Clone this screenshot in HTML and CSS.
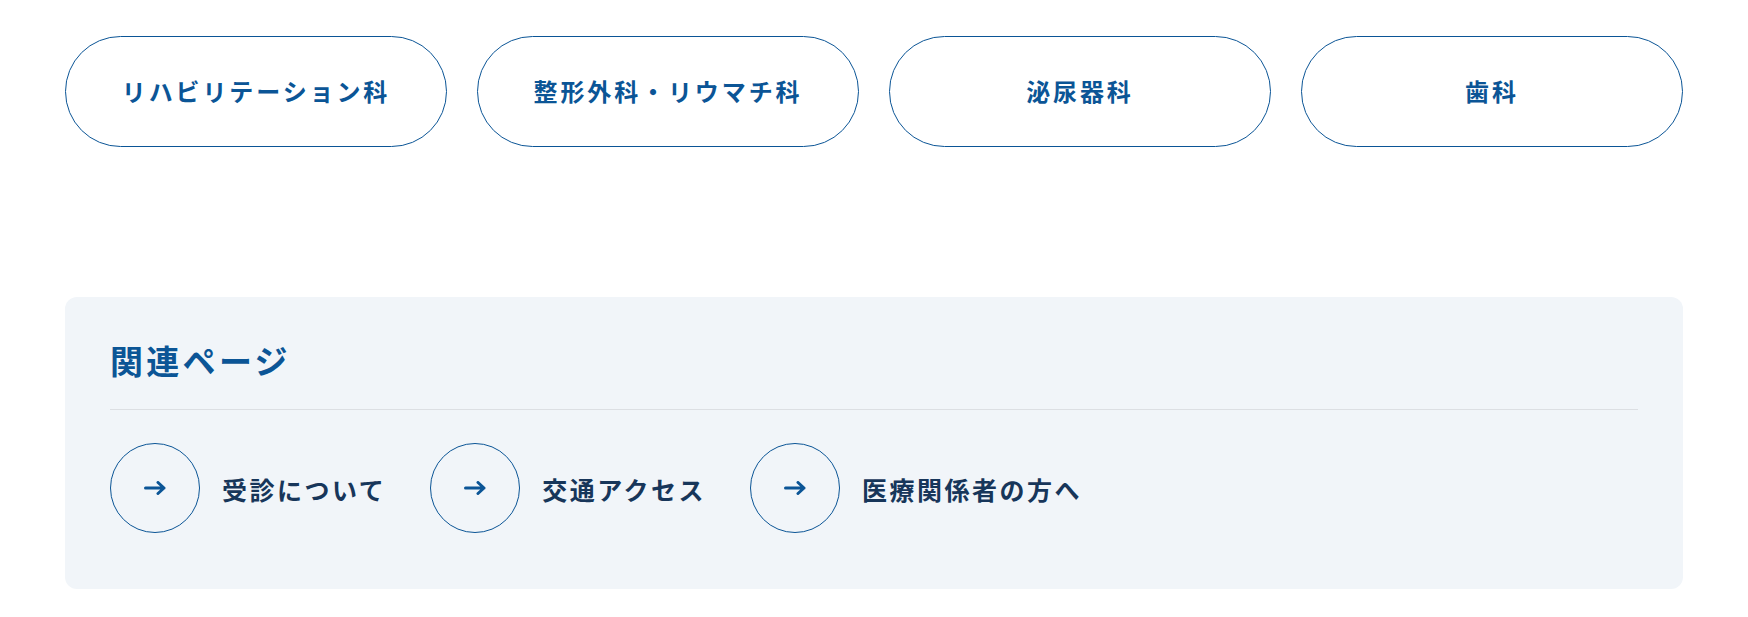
FILE: index.html
```html
<!DOCTYPE html>
<html lang="ja">
<head>
<meta charset="utf-8">
<title>診療科・関連ページ</title>
<link rel="stylesheet" href="styles.css">
</head>
<body>
<main class="page">
  <nav class="dept-list">
    <a class="dept-btn" href="#">リハビリテーション科</a>
    <a class="dept-btn" href="#">整形外科・リウマチ科</a>
    <a class="dept-btn" href="#">泌尿器科</a>
    <a class="dept-btn" href="#">歯科</a>
  </nav>

  <section class="related">
    <h2 class="related-title">関連ページ</h2>
    <ul class="related-links">
      <li><a class="related-link" href="#"><span class="circle"><svg viewBox="0 0 22 14" width="22" height="14"><path d="M1.5 7H20M14 1.5L20 7L14 12.5" fill="none" stroke="currentColor" stroke-width="3" stroke-linecap="round" stroke-linejoin="round"/></svg></span><span class="label">受診について</span></a></li>
      <li><a class="related-link" href="#"><span class="circle"><svg viewBox="0 0 22 14" width="22" height="14"><path d="M1.5 7H20M14 1.5L20 7L14 12.5" fill="none" stroke="currentColor" stroke-width="3" stroke-linecap="round" stroke-linejoin="round"/></svg></span><span class="label">交通アクセス</span></a></li>
      <li><a class="related-link" href="#"><span class="circle"><svg viewBox="0 0 22 14" width="22" height="14"><path d="M1.5 7H20M14 1.5L20 7L14 12.5" fill="none" stroke="currentColor" stroke-width="3" stroke-linecap="round" stroke-linejoin="round"/></svg></span><span class="label">医療関係者の方へ</span></a></li>
    </ul>
  </section>
</main>
</body>
</html>
```

FILE: styles.css
```css
* { box-sizing: border-box; }

body {
  margin: 0;
  background: #ffffff;
  font-family: "Noto Sans CJK JP", "Noto Sans", sans-serif;
  font-weight: 700;
}

.page {
  padding: 36px 65px 28px;
}

.dept-list {
  display: grid;
  grid-template-columns: repeat(4, 1fr);
  gap: 30px;
}

.dept-btn {
  display: flex;
  align-items: center;
  justify-content: center;
  height: 111px;
  border: 1px solid #0b5596;
  border-radius: 999px;
  color: #0b5596;
  text-decoration: none;
  font-size: 24px;
  letter-spacing: 0.12em;
  padding-bottom: 2px;
}

.related {
  margin-top: 150px;
  background: #f1f5f9;
  border-radius: 12px;
  padding: 38px 45px 56px;
}

.related-title {
  margin: 0;
  font-size: 33px;
  line-height: 50px;
  letter-spacing: 0.1em;
  color: #0b5596;
  font-weight: 700;
  padding-bottom: 24px;
  border-bottom: 1px solid #dcdfe3;
}

.related-links {
  list-style: none;
  margin: 33px 0 0;
  padding: 0;
  display: flex;
  gap: 44px;
}

.related-link {
  display: flex;
  align-items: center;
  gap: 22px;
  text-decoration: none;
  color: #17365a;
}

.circle {
  width: 90px;
  height: 90px;
  border: 1px solid #0b5596;
  border-radius: 50%;
  display: flex;
  align-items: center;
  justify-content: center;
  color: #0b5596;
}

.label {
  font-size: 25px;
  letter-spacing: 0.1em;
  padding-top: 2px;
}
```
